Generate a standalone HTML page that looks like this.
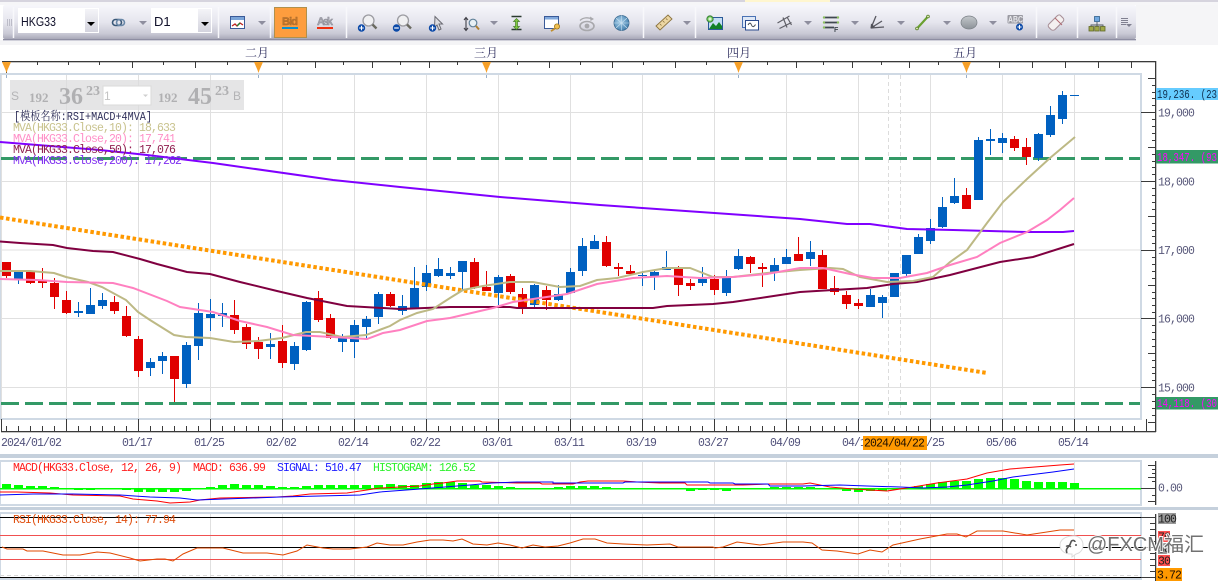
<!DOCTYPE html>
<html lang="zh">
<head>
<meta charset="utf-8">
<title>HKG33 D1</title>
<style>
html,body{margin:0;padding:0;background:#fff;width:1218px;height:581px;overflow:hidden}
svg{display:block;position:absolute;left:0;top:0}
.m{font-family:"Liberation Mono","Noto Serif CJK SC",monospace;font-size:11.5px;letter-spacing:-.9px}
.c{font-family:"Liberation Mono","Noto Serif CJK SC",monospace;font-size:12px}
.s{font-family:"Liberation Serif",serif;font-weight:bold;fill:#b0b0b2}
.a{font-family:"Liberation Sans",sans-serif;fill:#b4b4b6;font-size:12px}
</style>
</head>
<body>
<svg width="1218" height="581" viewBox="0 0 1218 581" xmlns="http://www.w3.org/2000/svg">
<defs>
<linearGradient id="tb" x1="0" y1="0" x2="0" y2="1">
<stop offset="0" stop-color="#f7f7fb"/><stop offset=".5" stop-color="#e6e6ee"/><stop offset=".85" stop-color="#c8c8d4"/><stop offset="1" stop-color="#a8a8b8"/>
</linearGradient>
<linearGradient id="bt" x1="0" y1="0" x2="0" y2="1">
<stop offset="0" stop-color="#f4f4f8"/><stop offset="1" stop-color="#d4d4de"/>
</linearGradient>
<radialGradient id="gl" cx=".4" cy=".4" r=".7"><stop offset="0" stop-color="#a8d0ea"/><stop offset="1" stop-color="#3a78a8"/></radialGradient>
<linearGradient id="el" x1="0" y1="0" x2="0" y2="1"><stop offset="0" stop-color="#c4c8cc"/><stop offset="1" stop-color="#8c9298"/></linearGradient>
</defs>

<!-- top strip -->
<rect x="0" y="0" width="1218" height="2" fill="#d6d4de"/>
<rect x="745" y="0" width="85" height="2" fill="#fff6cf"/>
<rect x="0" y="2" width="1218" height="3" fill="#f6f6f8"/>
<rect x="1136" y="5" width="82" height="40" fill="#f5f5f7"/>
<rect x="0" y="40" width="1136" height="5" fill="#f4f4f6"/>
<!-- toolbar -->
<rect x="3" y="5" width="1133" height="34" rx="2" fill="url(#tb)"/>
<rect x="3" y="39" width="1133" height="1" fill="#8e8ea2"/>
<rect x="3" y="40" width="1133" height="1" fill="#d0d0da"/>
<path d="M7.5 19v7M9.5 19v7M11.5 19v7" stroke="#bcbcc8" stroke-width="1"/>
<path d="M13.5 7v31M218.5 7v31M270.5 7v31M346.5 7v31M643.5 7v31M695.5 7v31M1036.5 7v31M1077.5 7v31M1116.5 7v31" stroke="#f8f8fb" stroke-width="1.5"/>
<!-- selects -->
<rect x="18" y="8" width="81" height="25" fill="#fff"/>
<rect x="85" y="9" width="13" height="23" fill="url(#bt)"/>
<path d="M87 22h8l-4 4z" fill="#000"/>
<text x="21" y="26" font-family="Liberation Sans,sans-serif" font-size="13" fill="#10102a" textLength="35" lengthAdjust="spacingAndGlyphs">HKG33</text>
<rect x="151" y="8" width="61" height="25" fill="#fff"/>
<rect x="198" y="9" width="13" height="23" fill="url(#bt)"/>
<path d="M201 22h8l-4 4z" fill="#000"/>
<text x="154" y="26" font-family="Liberation Sans,sans-serif" font-size="13" fill="#10102a">D1</text>
<!-- link -->
<rect x="112.5" y="19.5" width="9" height="6" rx="3" fill="none" stroke="#3a5878" stroke-width="1.6"/>
<rect x="116.5" y="19.5" width="8" height="6" rx="3" fill="none" stroke="#6a88a8" stroke-width="1.6"/>
<!-- gray arrows -->
<path d="M139 21h8l-4 4zM258 21h8l-4 4zM490 21h8l-4 4zM683 21h8l-4 4zM804 21h8l-4 4zM851 21h8l-4 4zM897 21h8l-4 4zM943 21h8l-4 4zM989 21h8l-4 4z" fill="#8e8e9e"/>
<!-- chart icon -->
<rect x="230.5" y="16.5" width="14" height="12" fill="#fff" stroke="#3a5a98"/>
<rect x="231" y="17" width="13" height="3" fill="#7aa4d8"/>
<path d="M232 26l3-2 2 2 3-3 3 2" fill="none" stroke="#c02020" stroke-width="1.3"/>
<path d="M237 26l3-3" stroke="#208030" stroke-width="1.3"/>
<!-- bid / ask -->
<rect x="274.5" y="7.5" width="32" height="30" fill="#fd9d3e" stroke="#b0904c"/>
<text x="282" y="25" font-family="Liberation Sans,sans-serif" font-weight="bold" font-size="11" fill="#c07428" stroke="#a56a30" stroke-width=".4" textLength="16">Bid</text>
<rect x="282" y="27" width="16" height="2" fill="#0a90d0"/>
<text x="317" y="25" font-family="Liberation Sans,sans-serif" font-weight="bold" font-size="11" fill="#a4a4ae" stroke="#8a8a94" stroke-width=".4" textLength="16">Ask</text>
<rect x="317" y="27" width="16" height="2" fill="#f03010"/>
<!-- zoom + -->
<circle cx="368.5" cy="20.5" r="5.5" fill="#f0f0f2" stroke="#9c9ca2" stroke-width="1.3"/>
<path d="M372.5 24.5l4 4" stroke="#6a6a60" stroke-width="2.4"/>
<circle cx="361.5" cy="28" r="3.7" fill="#0c4aa8"/><path d="M359.2 28h4.600M361.5 25.7v4.600" stroke="#fff" stroke-width="1.1"/>
<!-- zoom - -->
<circle cx="403" cy="20.5" r="5.5" fill="#f0f0f2" stroke="#9c9ca2" stroke-width="1.3"/>
<path d="M407 24.5l4 4" stroke="#6a6a60" stroke-width="2.4"/>
<circle cx="396.5" cy="28" r="3.7" fill="#0c4aa8"/><path d="M394.2 28h4.600" stroke="#fff" stroke-width="1.2"/>
<!-- cursor -->
<path d="M435 16.5l7.500 7.500h-3.500l2 5-2 1-2-5-2.500 2.500z" fill="#dcdce0" stroke="#6a6a72" stroke-width="1"/>
<circle cx="432.5" cy="28" r="3.7" fill="#0c4aa8"/><path d="M430.2 28h4.600M432.5 25.7v4.600" stroke="#fff" stroke-width="1.1"/>
<!-- i zoom -->
<path d="M466 18v12M464 20l2-2.500 2 2.500M464 28l2 2.500 2-2.500" fill="none" stroke="#404048" stroke-width="1.1"/>
<circle cx="473" cy="23" r="3.8" fill="#e8f0f4" stroke="#608098" stroke-width="1.2"/>
<path d="M476 26l3 3.500" stroke="#b08030" stroke-width="2"/>
<!-- green arrows -->
<path d="M511.5 16.5h10M511.5 29.5h10" stroke="#2a3a30" stroke-width="1.6"/>
<path d="M516.5 18.5l3 3h-2v5h2l-3 3-3-3h2v-5h-2z" fill="#80c840" stroke="#488028" stroke-width=".7"/>
<!-- window key -->
<rect x="544.5" y="16.5" width="14" height="12" fill="#fff" stroke="#3a5a98"/>
<rect x="545" y="17" width="13" height="2.5" fill="#80a8dc"/>
<circle cx="557" cy="26.5" r="2.6" fill="#f0c050" stroke="#a07820" stroke-width=".8"/>
<path d="M555 28.5l-4 2.600" stroke="#c09030" stroke-width="1.8"/>
<!-- eye gray -->
<ellipse cx="587" cy="26" rx="7" ry="4.5" fill="none" stroke="#a8a8ac" stroke-width="1.6"/>
<circle cx="587" cy="26" r="2.4" fill="#a8a8ac"/>
<path d="M580 20.5c3-3 8-3.500 12-1.500" fill="none" stroke="#a8a8ac" stroke-width="1.3"/>
<path d="M590 16.5l4 2.500-3.500 2z" fill="#a8a8ac"/>
<!-- globe -->
<circle cx="621.5" cy="23" r="7.5" fill="url(#gl)" stroke="#3a6a90" stroke-width=".8"/>
<path d="M621.5 15.5v15M614 23h15M616 18l11 10M627 18l-11 10" stroke="#c8e0f0" stroke-width=".6" fill="none"/>
<!-- ruler -->
<path d="M656 26l12-11 4 4-12 11z" fill="#ecd6a2" stroke="#8c7440" stroke-width=".9"/>
<path d="M660 24l1.500 1.500M663 21l1.500 1.500M666 18.500l1.500 1.500" stroke="#8c7440" stroke-width=".8"/>
<!-- picture -->
<rect x="708.5" y="17.5" width="14" height="12" fill="#c4ddf4" stroke="#2a5a98"/>
<path d="M709 29l4-6 3 3 3-4 3 4v3z" fill="#108028"/>
<circle cx="710" cy="19" r="3.2" fill="#70c858" stroke="#2a7030" stroke-width=".8"/><path d="M708.3 19h3.400M710 17.3v3.400" stroke="#fff" stroke-width=".9"/>
<!-- window 2 -->
<rect x="742.5" y="16.5" width="13" height="11" fill="#dfe8f6" stroke="#4a72b4"/>
<rect x="745.5" y="20.5" width="13" height="9.5" fill="#fff" stroke="#2a4a8c"/>
<path d="M748 25c1.500-2.500 2.500-2.500 3.500 0s2.500 2 4-.5" fill="none" stroke="#404850" stroke-width=".9"/>
<!-- fork -->
<path d="M779.5 28.5l12-6M783 17.5l4 10M787 17l4.500 8M777.500 23l12-7" stroke="#606068" stroke-width="1.2" fill="none"/>
<!-- list F -->
<path d="M824 17.5h14M824 22.5h14M824 27.5h10" stroke="#404850" stroke-width="1.8"/>
<circle cx="824" cy="17.5" r="1.2" fill="#8cc060"/><circle cx="838" cy="17.5" r="1.2" fill="#8cc060"/><circle cx="824" cy="22.5" r="1.2" fill="#8cc060"/><circle cx="838" cy="22.5" r="1.2" fill="#8cc060"/><circle cx="824" cy="27.5" r="1.2" fill="#8cc060"/>
<text x="834" y="32" font-family="Liberation Sans,sans-serif" font-size="7" font-weight="bold" fill="#404850">F</text>
<!-- fan -->
<path d="M871 28l5-12M871 28l11-7M871 28l13-1" stroke="#585860" stroke-width="1.3" fill="none"/>
<path d="M870.5 28.5l.5-5 4 3.500z" fill="#505058"/>
<!-- green line -->
<path d="M917 28.5l11-12" stroke="#6aa030" stroke-width="2.2"/>
<circle cx="917" cy="28.5" r="1.4" fill="#d8e8b0" stroke="#507820" stroke-width=".7"/><circle cx="928" cy="16.5" r="1.4" fill="#d8e8b0" stroke="#507820" stroke-width=".7"/>
<!-- ellipse -->
<ellipse cx="969" cy="22.5" rx="8" ry="6.5" fill="url(#el)" stroke="#7a8086" stroke-width=".7"/>
<!-- ABC -->
<rect x="1007.5" y="15" width="15.5" height="8.5" rx="1" fill="#9a9aa2"/>
<text x="1008" y="22.5" font-family="Liberation Sans,sans-serif" font-size="9" font-weight="bold" fill="#e8e8ec" textLength="15" lengthAdjust="spacingAndGlyphs">ABC</text>
<circle cx="1019.5" cy="27" r="3.5" fill="#0c4aa8"/><path d="M1017.4 27h4.200M1019.5 24.9v4.200" stroke="#fff" stroke-width="1.1"/>
<!-- eraser -->
<path d="M1049 24l8-8c1.500-1.500 3-1.500 4 0l2 2c1 1 1 2.500 0 3.500l-8 8c-1 1-3 1-4 0l-2-2c-1-1-1-2.500 0-3.500z" fill="#f4f0f0" stroke="#a89098" stroke-width="1.1"/>
<path d="M1055 18l7 7" stroke="#b06870" stroke-width="1"/>
<!-- hierarchy -->
<rect x="1094.5" y="16.5" width="5" height="5" fill="#70a8e0" stroke="#30608c" stroke-width=".8"/>
<path d="M1097 22v3M1091 28v-3h12v3M1097 25v3" fill="none" stroke="#505860" stroke-width=".9"/>
<rect x="1089" y="26.5" width="4.500" height="4.500" fill="#a0a848" stroke="#606828" stroke-width=".8"/>
<rect x="1094.7" y="26.5" width="4.500" height="4.500" fill="#a0a848" stroke="#606828" stroke-width=".8"/>
<rect x="1100.5" y="26.5" width="4.500" height="4.500" fill="#a0a848" stroke="#606828" stroke-width=".8"/>
<!-- menu -->
<path d="M1121 18.5h7M1121 20.5h7M1121 22.5h7M1121 24.5h5" stroke="#808090" stroke-width="1"/>
<path d="M1126 24h6l-3 3z" fill="#808090"/>

<!-- month labels -->
<g font-family="Noto Serif CJK SC,serif" font-size="12" fill="#303060" text-anchor="middle">
<text x="257" y="57">二月</text><text x="486" y="57">三月</text><text x="739" y="57">四月</text><text x="965" y="57">五月</text>
</g>
<!-- top ruler -->
<rect x="2" y="61" width="1154" height="1.3" fill="#3a3a3a"/>
<path d="M6.5 62v12M37.5 62v3M68.5 62v3M99.5 62v3M132.5 62v6M163.5 62v3M195.5 62v6M227.5 62v3M258.5 62v6M287.5 62v3M315.5 62v6M343.5 62v3M372.5 62v6M400.5 62v3M429.5 62v6M457.5 62v3M487.5 62v3M517.5 62v3M549.5 62v6M580.5 62v3M612.5 62v6M643.5 62v3M675.5 62v6M706.5 62v3M738.5 62v3M767.5 62v3M796.5 62v6M823.5 62v3M852.5 62v6M881.5 62v3M909.5 62v6M938.5 62v3M966.5 62v3M999.5 62v6M1032.5 62v6M1065.5 62v6M1098.5 62v6M1131.5 62v6" stroke="#3a3a3a" stroke-width="1" fill="none"/>

<!-- main panel grid -->
<path d="M1.5 75V418M66.5 75V418M138.5 75V418M210.5 75V418M282.5 75V418M354.5 75V418M426.5 75V418M498.5 75V418M570.5 75V418M642.5 75V418M714.5 75V418M786.5 75V418M858.5 75V418M930.5 75V418M1002.5 75V418M1074.5 75V418" stroke="#e0e0e0" stroke-width="1"/>
<path d="M2 112.5H1140M2 181.5H1140M2 250H1140M2 318.5H1140M2 387.5H1140" stroke="#e0e0e0" stroke-width="1"/>
<path d="M888.5 75V418M900.5 75V418M888.5 461V505M900.5 461V505M888.5 514V578M900.5 514V578" stroke="#dcdcdc" stroke-width="1" stroke-dasharray="4 3"/>
<path d="M6.5 74v4M258.5 74v4M486.5 74v4M738.5 74v4M966.5 74v4" stroke="#9ab0c8" stroke-width="1"/>
<rect x="0" y="74" width="1141" height="345" fill="none" stroke="#cfd9e4" stroke-width="2"/>

<!-- overlay panel -->
<rect x="10" y="80" width="234" height="30" fill="#dcdcde" fill-opacity=".75"/>
<text class="a" x="11" y="100">S</text>
<text class="s" x="29" y="102" font-size="13">192</text>
<text class="s" x="59" y="104" font-size="24">36</text>
<text class="s" x="86" y="95" font-size="14">23</text>
<rect x="103" y="86" width="48" height="19" fill="#fff" stroke="#dadada"/>
<text x="104" y="100" font-family="Liberation Sans,sans-serif" font-size="12" fill="#c4c4c4">1</text>
<path d="M143 94.5h5l-2.500 2.500z" fill="#cfcfcf"/>
<text class="s" x="158" y="102" font-size="13">192</text>
<text class="s" x="188" y="104" font-size="24">45</text>
<text class="s" x="215" y="95" font-size="14">23</text>
<text class="a" x="233" y="100">B</text>

<!-- green dashed -->
<path d="M1 158.5H1140M1 403.5H1140" stroke="#339966" stroke-width="3" stroke-dasharray="18 6"/>

<!-- candles -->
<path d="M6.5 262V278M30.5 272V284M42.5 268V288M54.5 278V309M66.5 291V314M114.5 296V314M126.5 306V337M138.5 336V377M174.5 356V402M234.5 300V334M246.5 324V349M258.5 337V359M282.5 325V368M318.5 291V322M330.5 314V339M390.5 292V307M474.5 258V289M486.5 271V291M510.5 274V294M522.5 288V314M546.5 286V310M606.5 236V267M618.5 263V276M630.5 265V274M678.5 266V296M690.5 279V290M714.5 275V295M750.5 256V273M762.5 263V287M798.5 237V261M822.5 250V289M834.5 276V295M846.5 291V309M858.5 299V309M966.5 188V209M1014.5 136V151M1026.5 138V165" stroke="#e00000" stroke-width="1"/>
<path fill="#e00000" d="M2 262h9v14h-9zM26 272h9v11h-9zM38 280h9v3h-9zM50 283h9v14h-9zM62 300h9v13h-9zM110 302h9v9h-9zM122 316h9v20h-9zM134 339h9v32h-9zM170 356h9v23h-9zM230 315h9v15h-9zM242 327h9v17h-9zM254 342h9v7h-9zM278 341h9v22h-9zM314 298h9v22h-9zM326 318h9v20h-9zM386 294h9v12h-9zM470 262h9v26h-9zM482 287h9v4h-9zM506 276h9v16h-9zM518 294h9v13h-9zM542 290h9v10h-9zM602 242h9v24h-9zM614 267h9v2h-9zM626 271h9v3h-9zM674 269h9v16h-9zM686 283h9v3h-9zM710 279h9v11h-9zM746 257h9v7h-9zM758 267h9v2h-9zM794 254h9v7h-9zM818 255h9v34h-9zM830 288h9v4h-9zM842 295h9v9h-9zM854 303h9v3h-9zM962 195h9v14h-9zM1010 139h9v9h-9zM1022 147h9v10h-9z"/>
<path d="M18.5 272V284M78.5 302V317M90.5 288V314M102.5 293V309M150.5 358V376M162.5 352V374M186.5 342V388M198.5 303V360M210.5 299V331M222.5 303V327M270.5 333V359M294.5 342V370M306.5 301V351M342.5 334V352M354.5 320V358M366.5 316V338M378.5 292V324M402.5 295V315M414.5 267V309M426.5 265V291M438.5 258V277M450.5 267V279M462.5 261V290M498.5 275V305M534.5 284V307M558.5 285V301M570.5 268V294M582.5 238V276M594.5 235V249M642.5 271V286M654.5 270V290M666.5 251V270M702.5 267V286M726.5 270V296M738.5 249V270M774.5 258V281M786.5 249V264M810.5 241V266M870.5 289V307M882.5 295V318M894.5 273V297M906.5 255V276M918.5 234V254M930.5 219V244M942.5 197V228M954.5 178V204M978.5 137V200M990.5 129V155M1002.5 133V153M1038.5 133V161M1050.5 106V137M1062.5 91V124" stroke="#0060c0" stroke-width="1"/>
<path fill="#0060c0" d="M14 272h9v8h-9zM74 311h9v2h-9zM86 305h9v9h-9zM98 300h9v6h-9zM146 362h9v6h-9zM158 356h9v5h-9zM182 345h9v39h-9zM194 313h9v33h-9zM206 314h9v4h-9zM218 313h9v3h-9zM266 344h9v3h-9zM290 346h9v18h-9zM302 302h9v48h-9zM338 337h9v5h-9zM350 325h9v17h-9zM362 319h9v8h-9zM374 294h9v23h-9zM398 306h9v5h-9zM410 288h9v21h-9zM422 273h9v14h-9zM434 269h9v7h-9zM446 273h9v3h-9zM458 261h9v11h-9zM494 277h9v16h-9zM530 285h9v20h-9zM554 294h9v6h-9zM566 272h9v21h-9zM578 246h9v25h-9zM590 241h9v8h-9zM638 275h9v1h-9zM650 272h9v4h-9zM662 267h9v3h-9zM698 279h9v4h-9zM722 278h9v15h-9zM734 256h9v13h-9zM770 265h9v7h-9zM782 257h9v7h-9zM806 252h9v7h-9zM866 295h9v12h-9zM878 297h9v6h-9zM890 273h9v24h-9zM902 255h9v19h-9zM914 237h9v17h-9zM926 228h9v13h-9zM938 207h9v20h-9zM950 196h9v7h-9zM974 140h9v60h-9zM986 139h9v2h-9zM998 138h9v5h-9zM1034 134h9v24h-9zM1046 115h9v20h-9zM1058 95h9v24h-9zM1070 95h9v1h-9z"/>

<!-- orange trend -->
<path d="M0 217.5L987 373" stroke="#ff9900" stroke-width="4" stroke-dasharray="3.500 2.600" fill="none"/>
<!-- MA200 -->
<polyline fill="none" stroke="#8000ff" stroke-width="2" points="0,142 100,150 147,155 213,163 333,180 400,187 500,197 600,205 700,212 800,219 847,224 870,224 907,229 953,230 1027,232 1063,232 1074,231"/>
<!-- MA50 -->
<polyline fill="none" stroke="#800040" stroke-width="2" points="0,241.5 20,243 53,245 67,248 93,251 113,252 140,259 157,264 187,272 210,274 240,282 277,291 307,298 347,306 400,309 450,307 510,307 517,308 653,308 667,306 713,304 733,302 767,297 800,292 833,290 867,288 893,284 917,282 950,275 1000,262 1033,257 1074,244"/>
<!-- MA10 -->
<polyline fill="none" stroke="#bdb985" stroke-width="2" points="0,271 30,271 54,273 66,277 88,282 102,287 126,300 138,312 150,320 174,335 186,337 210,338 234,342 258,341 282,338 294,335 306,332 320,332 342,337 366,335 390,326 400,320 417,313 433,309 450,298 463,290 483,286 510,282 533,282 560,287 580,286 597,280 617,278 643,272 667,268 690,268 713,277 733,277 767,273 800,270 830,268 843,269 860,277 887,282 913,281 933,277 950,262 967,250 987,223 1003,202 1027,179 1050,158 1075,137"/>
<!-- MA20 -->
<polyline fill="none" stroke="#ff80c0" stroke-width="2" points="0,279 37,280 67,282 113,283 133,288 167,301 180,307 213,312 240,321 267,327 293,335 333,337 367,339 383,333 400,330 427,321 450,318 493,308 513,302 533,299 567,294 597,284 633,278 667,276 700,278 733,277 767,274 800,268 823,268 850,274 873,278 900,278 927,273 950,265 977,257 1000,243 1027,232 1047,220 1060,210 1074,198"/>

<!-- legend -->
<text class="c" x="14" y="120" fill="#30305a" textLength="138" lengthAdjust="spacingAndGlyphs">[模板名称:RSI+MACD+4MVA]</text>
<text class="m" x="13" y="131" fill="#c9c38e">MVA(HKG33.Close,10): 18,633</text>
<text class="m" x="13" y="142" fill="#ff90c8">MVA(HKG33.Close,20): 17,741</text>
<text class="m" x="13" y="153" fill="#902050">MVA(HKG33.Close,50): 17,076</text>
<text class="m" x="13" y="164" fill="#8030f0">MVA(HKG33.Close,200): 17,262</text>

<!-- markers -->
<path d="M2 62h9l-3.500 8-1 3-1-3zM254 62h9l-3.500 8-1 3-1-3zM482 62h9l-3.500 8-1 3-1-3zM734 62h9l-3.500 8-1 3-1-3zM962 62h9l-3.500 8-1 3-1-3z" fill="#f7a028"/>

<!-- right axis main -->
<rect x="1155" y="61" width="1.3" height="371" fill="#3a3a3a"/>
<path stroke="#3a3a3a" stroke-width="1" d="M1148 78.5h7M1152 85.5h3M1152 92.5h3M1152 98.5h3M1152 105.5h3M1141 112.5h14M1152 119.5h3M1152 126.5h3M1152 133.5h3M1152 140.5h3M1148 147.5h7M1152 154.5h3M1152 161.5h3M1152 167.5h3M1152 174.5h3M1141 181.5h14M1152 188.5h3M1152 195.5h3M1152 202.5h3M1152 209.5h3M1148 216.5h7M1152 223.5h3M1152 230.5h3M1152 236.5h3M1152 243.5h3M1141 250.5h14M1152 257.5h3M1152 264.5h3M1152 271.5h3M1152 278.5h3M1148 285.5h7M1152 292.5h3M1152 298.5h3M1152 305.5h3M1152 312.5h3M1141 318.5h14M1152 325.5h3M1152 332.5h3M1152 339.5h3M1152 346.5h3M1148 353.5h7M1152 360.5h3M1152 367.5h3M1152 373.5h3M1152 380.5h3M1141 387.5h14M1152 394.5h3M1152 401.5h3M1152 408.5h3M1152 415.5h3M1148 422.5h7"/>
<g class="m" fill="#58587a">
<text x="1158" y="116.5">19,000</text>
<text x="1158" y="185.5">18,000</text>
<text x="1158" y="254">17,000</text>
<text x="1158" y="322.5">16,000</text>
<text x="1158" y="391.5">15,000</text>
</g>
<rect x="1156" y="88" width="62" height="12" fill="#66ccff"/>
<text x="1157" y="98" font-family="Liberation Mono,monospace" font-size="11.5" fill="#103050" textLength="60" lengthAdjust="spacingAndGlyphs">19,236. (23</text>
<rect x="1156" y="150" width="62" height="13.5" fill="#339966"/>
<text x="1157" y="161" font-family="Liberation Mono,monospace" font-size="11.5" fill="#ff00ff" textLength="60" lengthAdjust="spacingAndGlyphs">18,347. (93</text>
<rect x="1156" y="397" width="62" height="12.5" fill="#339966"/>
<text x="1157" y="407" font-family="Liberation Mono,monospace" font-size="11.5" fill="#ff00ff" textLength="60" lengthAdjust="spacingAndGlyphs">14,118. (30</text>

<!-- bottom time ruler -->
<rect x="1" y="431" width="1155" height="1.3" fill="#3a3a3a"/>
<path d="M1.5 419v12M66.5 419v12M138.5 419v12M210.5 419v12M282.5 419v12M354.5 419v12M426.5 419v12M498.5 419v12M570.5 419v12M642.500 419v12M714.5 419v12M786.5 419v12M858.5 419v12M930.5 419v12M1002.5 419v12M1074.5 419v12M1146.5 419v12" stroke="#3a3a3a" stroke-width="1"/>
<path d="M6 428.500H1155" stroke="#3a3a3a" stroke-width="5" stroke-dasharray="1 11"/>
<g class="m" fill="#50507a">
<text x="1" y="446">2024/01/02</text>
<text x="122" y="446">01/17</text>
<text x="194" y="446">01/25</text>
<text x="266" y="446">02/02</text>
<text x="338" y="446">02/14</text>
<text x="410" y="446">02/22</text>
<text x="482" y="446">03/01</text>
<text x="554" y="446">03/11</text>
<text x="626" y="446">03/19</text>
<text x="698" y="446">03/27</text>
<text x="770" y="446">04/09</text>
<text x="842" y="446">04/18</text>
<text x="914" y="446">04/25</text>
<text x="986" y="446">05/06</text>
<text x="1058" y="446">05/14</text>
</g>
<rect x="863" y="436" width="64" height="14" fill="#ff9900"/>
<text class="m" x="864" y="446.5" fill="#201000">2024/04/22</text>

<!-- bands -->
<rect x="0" y="454" width="1218" height="4" fill="#c5d0dc"/>
<rect x="0" y="507" width="1218" height="3" fill="#c5d0dc"/>

<!-- MACD panel -->
<path d="M66.5 461V505M138.5 461V505M210.5 461V505M282.5 461V505M354.5 461V505M426.5 461V505M498.5 461V505M570.5 461V505M642.5 461V505M714.5 461V505M786.5 461V505M858.5 461V505M930.5 461V505M1002.5 461V505M1074.5 461V505" stroke="#e0e0e0" stroke-width="1"/>
<rect x="0" y="461" width="1141" height="44" fill="none" stroke="#cfd9e4" stroke-width="2"/>
<text class="m" x="13" y="471" fill="#ff2020">MACD(HKG33.Close, 12, 26, 9)</text>
<text class="m" x="193" y="471" fill="#ff2020">MACD: 636.99</text>
<text class="m" x="277" y="471" fill="#2020ff">SIGNAL: 510.47</text>
<text class="m" x="373" y="471" fill="#30f030">HISTOGRAM: 126.52</text>
<path fill="#00ff00" d="M2 484h9v4h-9zM14 485h9v3h-9zM26 486h9v2h-9zM38 486h9v2h-9zM50 487h9v1h-9zM206 487h9v1h-9zM218 485h9v3h-9zM230 484h9v4h-9zM242 485h9v3h-9zM254 485h9v3h-9zM266 486h9v2h-9zM278 487h9v1h-9zM290 487h9v1h-9zM302 486h9v2h-9zM314 485h9v3h-9zM326 485h9v3h-9zM338 485h9v3h-9zM350 485h9v3h-9zM362 485h9v3h-9zM374 485h9v3h-9zM386 484h9v4h-9zM398 485h9v3h-9zM410 485h9v3h-9zM422 483h9v5h-9zM434 482h9v6h-9zM446 482h9v6h-9zM458 483h9v5h-9zM470 485h9v3h-9zM482 485h9v3h-9zM494 486h9v2h-9zM506 487h9v1h-9zM554 487h9v1h-9zM566 486h9v2h-9zM578 486h9v2h-9zM590 486h9v2h-9zM602 487h9v1h-9zM770 487h9v1h-9zM782 487h9v1h-9zM794 487h9v1h-9zM806 487h9v1h-9zM914 486h9v2h-9zM926 484h9v4h-9zM938 482h9v6h-9zM950 481h9v7h-9zM962 481h9v7h-9zM974 479h9v9h-9zM986 478h9v10h-9zM998 478h9v10h-9zM1010 479h9v9h-9zM1022 481h9v7h-9zM1034 482h9v6h-9zM1046 482h9v6h-9zM1058 482h9v6h-9zM1070 483h9v5h-9zM74 489h9v1h-9zM86 489h9v1h-9zM122 489h9v1h-9zM134 489h9v3h-9zM146 489h9v3h-9zM158 489h9v3h-9zM170 489h9v3h-9zM182 489h9v2h-9zM686 489h9v2h-9zM698 489h9v1h-9zM710 489h9v1h-9zM722 489h9v2h-9zM842 489h9v2h-9zM854 489h9v3h-9zM866 489h9v2h-9zM878 489h9v2h-9z"/>
<rect x="0" y="488" width="1141" height="1.5" fill="#00ff00"/>
<polyline fill="none" stroke="#ff0000" stroke-width="1" points="0,492 17,492 50,493 73,495 120,496 133,499 157,501 170,503 190,502 200,500 220,498 277,497 293,496 310,494 347,493 380,488 420,486 433,484 443,483 457,481 480,481 482,482 517,483 540,483 542,484 573,484 580,482 588,481 623,481 637,482 660,483 685,483 687,485 743,485 770,484 803,484 810,483 830,487 853,489 887,491 913,487 937,483 967,479 987,473 1010,469 1060,465 1074,464"/>
<polyline fill="none" stroke="#0000ff" stroke-width="1" points="0,495 33,494 73,494 120,495 150,497 180,498 197,500 280,497 360,495 380,492 420,489 432,488 445,487 457,486 470,485 492,483 517,482 553,482 553,483 623,483 625,482 708,482 710,483 733,483 735,484 768,484 770,486 803,486 840,485 867,486 900,487 923,488 947,487 967,485 993,481 1013,477 1053,472 1074,469"/>
<rect x="1155" y="461" width="1.3" height="44" fill="#3a3a3a"/>
<path stroke="#3a3a3a" stroke-width="1" d="M1148 465.5h7M1152 469.5h3M1152 473.5h3M1148 477.5h7M1152 481.5h3M1141 488.5h14M1152 495.5h3M1148 501.5h7"/>
<text class="m" x="1158" y="491.5" fill="#58587a">0.00</text>

<!-- RSI panel -->
<path d="M66.5 514V578M138.5 514V578M210.5 514V578M282.5 514V578M354.5 514V578M426.5 514V578M498.5 514V578M570.5 514V578M642.5 514V578M714.5 514V578M786.5 514V578M858.5 514V578M930.5 514V578M1002.5 514V578M1074.5 514V578" stroke="#e0e0e0" stroke-width="1"/>
<rect x="0" y="513" width="1141" height="66" fill="none" stroke="#cfd9e4" stroke-width="2"/>
<path d="M0 575.5H1141" stroke="#d8d8d8" stroke-width="1" stroke-dasharray="4 3"/>
<path d="M0 517.5H1141M0 547.5H1141M0 577.5H1141" stroke="#000" stroke-width="1"/>
<path d="M0 535.5H1141M0 559.5H1141" stroke="#f05050" stroke-width="1"/>
<text class="m" x="13" y="523" fill="#e05010">RSI(HKG33.Close, 14): 77.94</text>
<polyline fill="none" stroke="#e04800" stroke-width="1" points="2,547 7,549 23,549 27,551 43,551 63,555 80,555 97,552 110,553 130,558 140,561 157,559 165,559 173,561 183,554 197,548 223,548 243,553 267,553 283,555 297,551 307,545 323,548 333,549 350,549 367,547 377,543 390,545 403,545 417,542 430,540 443,540 453,541 462,539 473,544 487,545 498,543 510,545 522,548 533,545 545,547 558,546 570,543 583,539 595,539 607,543 623,544 647,545 670,544 678,547 713,547 715,548 723,547 737,542 745,543 760,545 783,542 803,542 812,543 822,550 837,551 858,554 870,550 882,552 893,545 920,539 947,534 957,534 966,537 977,531 1003,531 1027,535 1060,530 1074,530"/>
<rect x="1155" y="514" width="1.3" height="67" fill="#3a3a3a"/>
<path stroke="#3a3a3a" stroke-width="1" d="M1141 517.5h14M1150 523.5h5M1150 529.5h5M1150 535.5h5M1150 541.5h5M1141 547.5h14M1150 553.5h5M1150 559.5h5M1150 565.5h5M1150 571.5h5M1141 577.5h14"/>
<rect x="1158" y="513" width="18" height="11" fill="#9a9a9a"/>
<text class="m" x="1158" y="522.5" fill="#202020">100</text>
<rect x="1158" y="531" width="12" height="11" fill="#ff5050"/>
<text class="m" x="1158" y="540.5" fill="#202020">70</text>
<rect x="1158" y="543" width="12" height="11" fill="#9a9a9a"/>
<text class="m" x="1158" y="552.5" fill="#202020">50</text>
<rect x="1158" y="555" width="12" height="11" fill="#ff5050"/>
<text class="m" x="1158" y="564.5" fill="#202020">30</text>
<rect x="1156" y="568" width="26" height="13" fill="#ff9900"/>
<text class="m" x="1157" y="578.5" fill="#201000">3.72</text>

<!-- watermark -->
<path d="M1072 536c6-1 11 3 11 9 0 5-3 8-7 9l-4 3v-3c-7 .5-12-3.500-12-9 0-5 5-8.500 12-9z" fill="#fff" stroke="#dcdcdc" stroke-width="1"/>
<path d="M1067 553c-1.500-3 0-5 2-7 2.500-2.500 1-5 3.500-5.500 1.500-.3 2.500 .5 2.500 1.500" fill="none" stroke="#555" stroke-width="1.6"/>
<path d="M1066 546.500c2-1.500 4-.5 5 .5" fill="none" stroke="#555" stroke-width="1.4"/>
<circle cx="1076" cy="545" r="1" fill="#555"/>
<text x="1087" y="551" font-family="Liberation Sans,Noto Sans CJK SC,sans-serif" font-size="20" fill="#6a6a6a" stroke="#fff" stroke-width="2" paint-order="stroke" opacity=".95">@FXCM福汇</text>
</svg>
</body>
</html>
